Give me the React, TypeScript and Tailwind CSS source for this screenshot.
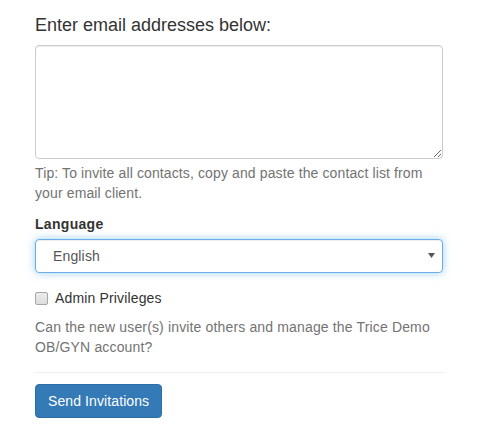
import React from "react";

export default function App() {
  return (
    <div className="w-[480px] h-[435px] bg-white" style={{ fontFamily: '"Liberation Sans", Arial, sans-serif' }}>
      <div className="ml-[35px] w-[408px] pt-[15px]">
        <h3 className="text-[18px] leading-[20px] text-[#333] font-normal m-0">Enter email addresses below:</h3>
        <textarea
          className="block mt-[10px] w-full h-[114px] box-border border border-[#ccc] rounded-[4px] shadow-[inset_0_1px_1px_rgba(0,0,0,0.075)] px-3 py-[6px] text-[14px] text-[#555] resize-y outline-none"
        />
        <p className="mt-[4px] text-[14px] leading-[20px] tracking-[0.12px] text-[#737373]">
          Tip: To invite all contacts, copy and paste the contact list from your email client.
        </p>
        <div className="mt-[11px] text-[14px] leading-[20px] font-bold tracking-[0.3px] text-[#333]">Language</div>
        <div className="mt-[5px] h-[34px] box-border border border-[#66afe9] rounded-[4px] shadow-[inset_0_1px_1px_rgba(0,0,0,0.075),0_0_8px_rgba(102,175,233,0.6)] flex items-center justify-between pl-[17px] pr-[7px] text-[14px] tracking-[0.15px] text-[#555]">
          <span>English</span>
          <svg width="7" height="5" viewBox="0 0 7 5" className="mb-[1px]">
            <path d="M0 0 H7 L3.5 5 Z" fill="#555" />
          </svg>
        </div>
        <label className="mt-[15px] flex items-center h-[20px] text-[14px] tracking-[0.15px] text-[#333]">
          <span className="w-[13px] h-[13px] box-border border border-[#a6a6a6] rounded-[2px] bg-gradient-to-b from-[#ececec] to-[#dcdcdc]" />
          <span className="ml-[7px]">Admin Privileges</span>
        </label>
        <p className="mt-[9px] text-[14px] leading-[20px] tracking-[0.15px] text-[#737373]">
          Can the new user(s) invite others and manage the Trice Demo OB/GYN account?
        </p>
        <div className="mt-[15px] border-t border-[#eee]" />
        <button className="mt-[11px] h-[34px] box-border px-[12px] border border-[#2e6da4] bg-[#337ab7] text-white text-[14px] tracking-[0.1px] rounded-[4px]">
          Send Invitations
        </button>
      </div>
    </div>
  );
}
